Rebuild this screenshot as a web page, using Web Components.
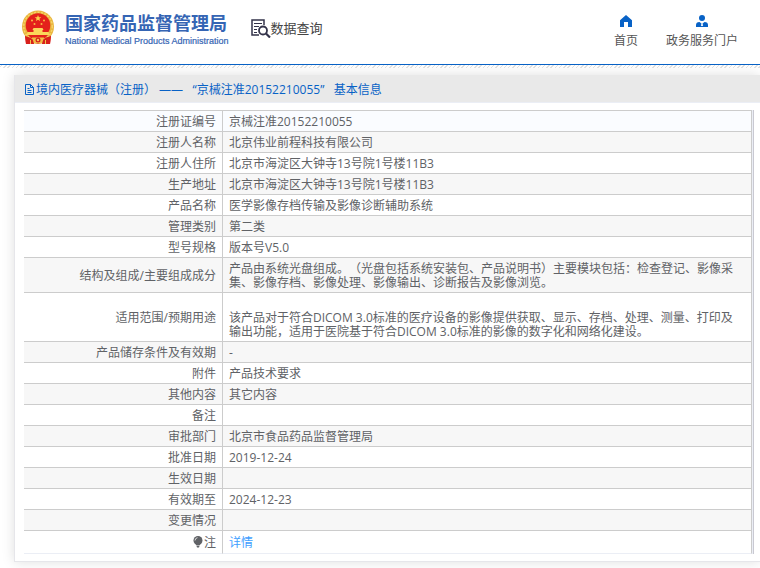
<!DOCTYPE html>
<html lang="zh-CN">
<head>
<meta charset="utf-8">
<title>数据查询</title>
<style>
body{margin:0;background:#fff;color:#606266;font:12px/14px "Open Sans","Noto Sans CJK SC",sans-serif;text-spacing-trim:space-all}
main{display:block;padding:7px 0 6px 14px}
</style>
</head>
<body>
<site-header>
  <nav-link href="#home">
    <svg slot="icon" width="12" height="12" viewBox="0 0 12 12"><path fill="#0862c6" d="M6 0 12 5.2V12H8V7H4v5H0V5.2z"/></svg>
    首页
  </nav-link>
  <nav-link href="#portal">
    <svg slot="icon" width="12" height="12" viewBox="0 0 12 12"><circle cx="6" cy="3" r="3" fill="#0862c6"/><path fill="#0862c6" d="M0 12V10Q0 7.200 3.500 7L6 9 8.500 7Q12 7.200 12 10v2z"/><path fill="#fff" d="M5.500 8.500h1l.6 2L6 11.300l-1.100-.8z"/></svg>
    政务服务门户
  </nav-link>
</site-header>
<main>
  <info-card>
    <span slot="title">境内医疗器械（注册） ——&nbsp;&nbsp; “京械注准20152210055”&nbsp;&nbsp; 基本信息</span>
    <detail-table></detail-table>
  </info-card>
</main>

<script>
const define = (name, html, setup) => customElements.define(name, class extends HTMLElement {
  constructor() {
    super();
    this.attachShadow({mode: 'open'}).innerHTML = html;
  }
  connectedCallback() { if (setup) setup(this, this.shadowRoot); }
});

define('national-emblem', `
<style>:host{display:block}svg{display:block}</style>
<svg width="34" height="36" viewBox="0 0 34 36" aria-hidden="true">
  <path fill="#d8201c" d="M4 25h26l-1 9-8-1-4 1-4-1-8 1z"/>
  <circle cx="17" cy="16.500" r="16" fill="#e9b53c"/>
  <circle cx="17" cy="16.500" r="14.300" fill="none" stroke="#f6d36a" stroke-width="1.500" stroke-dasharray="2 1.500"/>
  <circle cx="17" cy="15.500" r="12.300" fill="#e4211b"/>
  <path fill="#fbd24c" d="M17 5l.9 2.200 2.400.1-1.900 1.500.7 2.300-2.100-1.300-2.100 1.300.7-2.300-1.900-1.500 2.400-.1z"/>
  <g fill="#f7bd42"><circle cx="11" cy="10.500" r="1"/><circle cx="23" cy="10.500" r="1"/><circle cx="13.500" cy="14" r="1"/><circle cx="20.500" cy="14" r="1"/></g>
  <path fill="#fbd65a" d="M12.500 18h9l1 2h-1v2h6l1 3h-23l1-3h6v-2h-1z"/>
  <path fill="#e4211b" d="M7 25h20l-3 3H10z"/>
  <path fill="#d8201c" d="M4 26q5 1 9 4v4l-8 0zM30 26q-5 1-9 4v4l8 0z"/>
  <path fill="#efbf46" d="M11 27.500h12l-2 6h-8z"/>
  <circle cx="17" cy="30" r="2.500" fill="#d8201c"/><circle cx="17" cy="30" r="1.200" fill="#f5cd58"/>
  <path stroke="#f0c14a" d="M9.500 30v4M24.500 30v4"/>
</svg>`);

define('nav-link', `
<style>
:host{display:block}
a{display:flex;flex-direction:column;align-items:center;gap:6px;color:#555;text-decoration:none;line-height:16px}
</style>
<a><slot name="icon"></slot><span><slot></slot></span></a>`,
(el, root) => { root.querySelector('a').href = el.getAttribute('href'); });

define('site-header', `
<style>
:host{display:block}
header{display:flex;align-items:flex-start;height:64px;border-bottom:1px solid #0862c6;padding:0 22px 0 21px}
national-emblem{margin:10px 10px 0 0}
.brand{padding-top:11px;color:#3565b4;white-space:nowrap}
.name{font-size:18px;line-height:24px;font-weight:700}
.en{font:9px/12px "Liberation Sans",sans-serif;-webkit-text-stroke:.2px #3565b4}
.query{display:flex;align-items:center;margin:18px 0 0 21px;color:#444;font-size:13px;line-height:20px;white-space:nowrap}
nav{display:flex;gap:28px;margin:15px 0 0 auto}
.stripe{height:3px;background:repeating-linear-gradient(135deg,#fff 0 1px,#e2e2e2 1px 2px,#fff 2px 3px)}
</style>
<header>
  <national-emblem></national-emblem>
  <div class="brand"><div class="name">国家药品监督管理局</div><div class="en">National Medical Products Administration</div></div>
  <div class="query">
    <svg width="21" height="20" viewBox="0 0 21 20" fill="none" stroke="#33334a" aria-hidden="true"><path stroke-width="1.500" d="M9 17H2V2h12v5"/><path d="M4 5.500h8M4 8.500h5M4 11.500h3M4 14.500h3" stroke-width="1.200"/><circle cx="13" cy="12.500" r="4" stroke-width="1.800"/><path stroke-width="2.200" d="M16 15.500l4 4"/></svg>
    <span>数据查询</span>
  </div>
  <nav><slot></slot></nav>
</header>
<div class="stripe"></div>`);

define('info-card', `
<style>
:host{display:block;border:solid #e6e6ea;border-width:0 0 1px 1px;box-shadow:0 0 12px rgba(0,0,0,.13)}
h1{display:flex;align-items:center;margin:0;padding:2px 9px 0;height:25px;background:#e9e9e9;border-bottom:1px solid #ebeef5;color:#0862c6;font-size:12px;font-weight:400;line-height:20px}
svg{flex:none;margin-right:1px}
.body{padding:7px 6px 7px 9px;background:#fff}
</style>
<h1><svg width="11" height="12" viewBox="0 0 11 12" fill="none" stroke="#0862c6" aria-hidden="true"><path d="M1.500 .5h5l3 3v7h-8zM6.500 .5v3h3M3.500 4.500h2M3.500 6.500h4M3.500 8.500h4"/></svg><slot name="title"></slot></h1>
<div class="body"><slot></slot></div>`);

const rows = [
  ['注册证编号', '京械注准20152210055'],
  ['注册人名称', '北京伟业前程科技有限公司'],
  ['注册人住所', '北京市海淀区大钟寺13号院1号楼11B3'],
  ['生产地址', '北京市海淀区大钟寺13号院1号楼11B3'],
  ['产品名称', '医学影像存档传输及影像诊断辅助系统'],
  ['管理类别', '第二类'],
  ['型号规格', '版本号V5.0'],
  ['结构及组成/主要组成成分', '产品由系统光盘组成。（光盘包括系统安装包、产品说明书）主要模块包括：检查登记、影像采集、影像存档、影像处理、影像输出、诊断报告及影像浏览。'],
  ['适用范围/预期用途', '<br>该产品对于符合DICOM 3.0标准的医疗设备的影像提供获取、显示、存档、处理、测量、打印及输出功能，适用于医院基于符合DICOM 3.0标准的影像的数字化和网络化建设。'],
  ['产品储存条件及有效期', '-'],
  ['附件', '产品技术要求'],
  ['其他内容', '其它内容'],
  ['备注', ''],
  ['审批部门', '北京市食品药品监督管理局'],
  ['批准日期', '2019-12-24'],
  ['生效日期', ''],
  ['有效期至', '2024-12-23'],
  ['变更情况', ''],
  ['<svg width="10" height="12" viewBox="0 0 10 12" aria-hidden="true"><circle cx="5" cy="4.500" r="4.500" fill="#606266"/><path fill="#606266" d="M2 7h6L6.500 9.500h-3zM3.500 10h3l-.5 1.500H4z"/><path d="M2 4.500Q2.200 2 4.500 1.700" fill="none" stroke="#ddd"/></svg>注', '<a href="#detail">详情</a>'],
];
define('detail-table', `
<style>
:host{display:block;border-right:1px solid #c9c9d2;background:#ebeef5;padding-right:1px}
table{width:100%;table-layout:fixed;border-collapse:separate;border-spacing:0;border-top:1px solid #ccc;background:#fff}
th,td{height:14px;padding:4px 6px 2px;border:solid #ccc;border-width:0 1px 1px 0;font-weight:400;line-height:14px;vertical-align:middle}
th{width:186px;text-align:right}
td{padding-right:12px;text-align:left}
tr:nth-child(even){background:#f7f7f7}
tr:first-child{background:#fafcff}
tr:last-child>*{height:16px;border-bottom-color:#ebeef5}
svg{vertical-align:-1px;margin-right:1px}
a{color:#409eff;text-decoration:none}
</style>
<table><tbody>${rows.map(([k, v]) => `<tr><th scope="row">${k}</th><td>${v}</td></tr>`).join('')}</tbody></table>`);
</script>
</body>
</html>
